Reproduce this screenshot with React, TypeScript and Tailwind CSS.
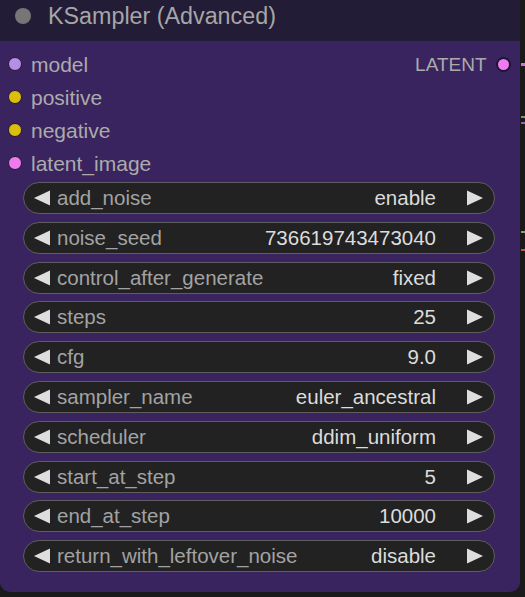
import React from "react";

const inputs = [
  { name: "model", color: "#b68ee6" },
  { name: "positive", color: "#dcbf0c" },
  { name: "negative", color: "#dcbf0c" },
  { name: "latent_image", color: "#ee7cf0" },
];

const widgets = [
  ["add_noise", "enable"],
  ["noise_seed", "736619743473040"],
  ["control_after_generate", "fixed"],
  ["steps", "25"],
  ["cfg", "9.0"],
  ["sampler_name", "euler_ancestral"],
  ["scheduler", "ddim_uniform"],
  ["start_at_step", "5"],
  ["end_at_step", "10000"],
  ["return_with_leftover_noise", "disable"],
];

function Tri({ dir }: { dir: "l" | "r" }) {
  return (
    <svg width="16" height="16" viewBox="0 0 16 16" className="shrink-0">
      {dir === "l" ? (
        <polygon points="0,8 16,0.5 16,15.5" fill="#dedede" />
      ) : (
        <polygon points="16,8 0,0.5 0,15.5" fill="#dedede" />
      )}
    </svg>
  );
}

export default function App() {
  return (
    <div className="relative w-[525px] h-[597px] overflow-hidden bg-[#1a1a1a] font-['Liberation_Sans',Arial,sans-serif]">
      <div className="w-[520px] rounded-b-[10px] bg-[#3a245f] pb-[20px]">
        <div className="h-[41px] bg-[#231c36] flex items-start">
          <div className="ml-[15px] mt-[8px] w-[16px] h-[16px] rounded-full bg-[#767676]" />
          <div className="ml-[17px] pt-[3px] text-[23.3px] leading-[26px] text-[#a6a6a6]">
            KSampler (Advanced)
          </div>
        </div>
        <div className="pt-[6.5px]">
          {inputs.map((inp, i) => (
            <div key={inp.name} className="h-[33px] flex items-center">
              <div
                className="ml-[8px] w-[14px] h-[14px] rounded-full border border-[#241a35] shrink-0"
                style={{ backgroundColor: inp.color }}
              />
              <div className="ml-[9px] text-[21px] leading-[33px] text-[#ababab]">{inp.name}</div>
              {i === 0 && (
                <div className="ml-auto flex items-center">
                  <div className="text-[19px] leading-[33px] text-[#ababab]">LATENT</div>
                  <div className="ml-[9.5px] mr-[9px] w-[15px] h-[15px] rounded-full border-2 border-[#1e1530] bg-[#ee7cf0]" />
                </div>
              )}
            </div>
          ))}
        </div>
        <div className="mt-[2.5px] ml-[22.5px] w-[472px] flex flex-col gap-[7.8px]">
          {widgets.map(([label, value]) => (
            <div
              key={label}
              className="h-[32px] rounded-full bg-[#222222] border border-[#5e5e5e] flex items-center pl-[10px] pr-[11px]"
            >
              <Tri dir="l" />
              <div className="ml-[7.5px] text-[20.5px] leading-[30px] text-[#a3a3a3] whitespace-nowrap">{label}</div>
              <div className="flex-1" />
              <div className="text-[20.5px] leading-[30px] text-[#dcdcdc] whitespace-nowrap">{value}</div>
              <div className="ml-[30.5px]">
                <Tri dir="r" />
              </div>
            </div>
          ))}
        </div>
      </div>
      <div className="absolute left-[521px] top-[63px] w-[4px] h-[3px] bg-[#d070d8]" />
      <div className="absolute left-[521px] top-[116px] w-[4px] h-[2px] bg-[#7f8f78]" />
      <div className="absolute left-[521px] top-[122px] w-[4px] h-[2px] bg-[#8a62b8]" />
      <div className="absolute left-[521px] top-[231px] w-[4px] h-[2px] bg-[#7f9f78]" />
      <div className="absolute left-[521px] top-[249px] w-[4px] h-[2px] bg-[#b85a50]" />
    </div>
  );
}
